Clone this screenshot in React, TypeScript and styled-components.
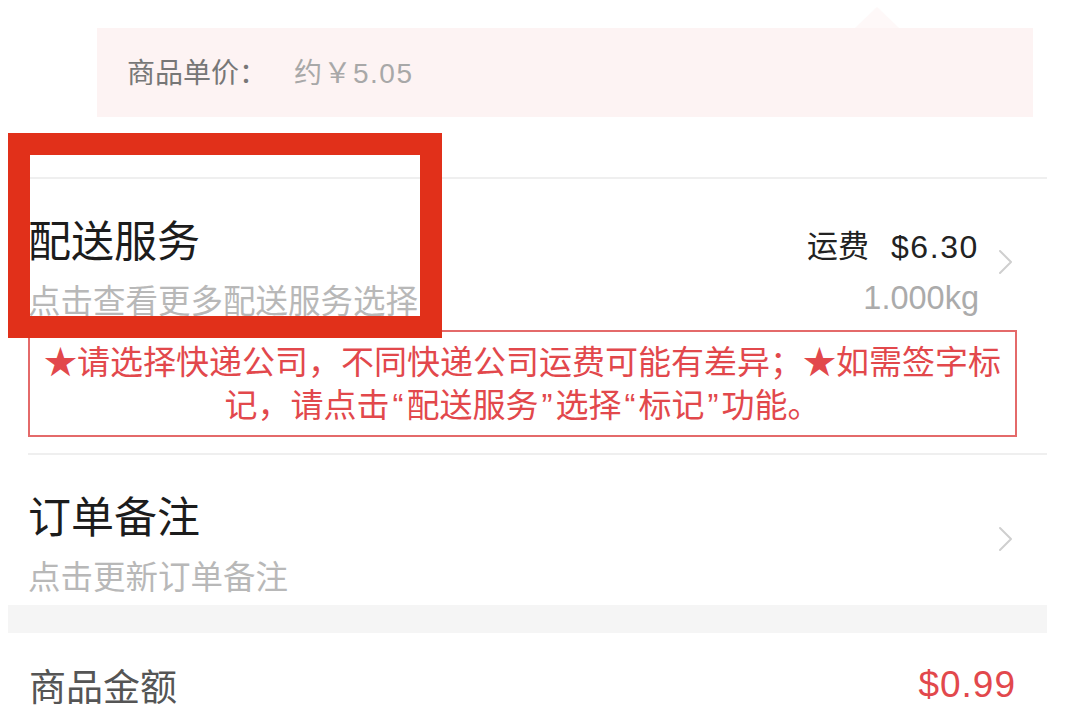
import React from "react";
import styled, { createGlobalStyle } from "styled-components";

const GlobalStyle = createGlobalStyle`
  html, body {
    margin: 0;
    padding: 0;
    background: #ffffff;
  }
  body {
    font-family: "Liberation Sans", "Noto Sans CJK SC", sans-serif;
  }
`;

const Page = styled.div`
  position: relative;
  width: 1080px;
  height: 716px;
  overflow: hidden;
  background: #fff;
`;

const Content = styled.div`
  width: 1039px;
  margin-left: 8px;
  padding-top: 28px;
`;

const PriceBubble = styled.div`
  position: relative;
  margin-left: 89px;
  width: 936px;
  height: 89px;
  box-sizing: border-box;
  padding: 0 0 4px 30px;
  display: flex;
  align-items: center;
  background: #fdf3f3;
  font-size: 28px;

  &::before {
    content: "";
    position: absolute;
    top: -21px;
    left: 758px;
    border-left: 22px solid transparent;
    border-right: 22px solid transparent;
    border-bottom: 21px solid #fef8f8;
  }
`;

const PriceLabel = styled.span`
  color: #777;
`;

const PriceValue = styled.span`
  color: #a8a8a8;
  margin-left: 27px;
  letter-spacing: 1.5px;
`;

const Divider = styled.div<{ $inset: number }>`
  height: 2px;
  background: #efefef;
  margin-left: ${(p) => p.$inset}px;
`;

const Row = styled.div<{ $top: number; $bottom: number }>`
  display: flex;
  align-items: flex-start;
  padding: ${(p) => p.$top}px 34px ${(p) => p.$bottom}px 20px;
`;

const Left = styled.div`
  flex: 1;
  display: flex;
  flex-direction: column;
  gap: 14px;
`;

const Title = styled.div`
  font-size: 43px;
  line-height: 52px;
  color: #1c1c1c;
`;

const Sub = styled.div`
  font-size: 32.5px;
  line-height: 40px;
  color: #b8b8b8;
`;

const Right = styled.div`
  display: flex;
  flex-direction: column;
  align-items: flex-end;
  gap: 11px;
  margin-top: 11px;
`;

const Fee = styled.div`
  font-size: 31px;
  line-height: 40px;
  color: #222;
  display: flex;
  gap: 22px;
`;

const FeeValue = styled.span`
  font-size: 32px;
  letter-spacing: 1.6px;
`;

const Weight = styled.div`
  font-size: 32.5px;
  line-height: 40px;
  color: #ababab;
`;

const ChevronBox = styled.div<{ $top: number; $gap: number }>`
  margin-top: ${(p) => p.$top}px;
  margin-left: ${(p) => p.$gap}px;
  width: 15px;
  height: 26px;
  display: flex;
`;

const Notice = styled.div`
  margin-left: 20px;
  width: 989px;
  box-sizing: border-box;
  border: 2px solid #e46a6a;
  padding: 9px 0 8px;
  text-align: center;
  white-space: nowrap;
  font-size: 33px;
  line-height: 43px;
  color: #e2484c;
`;

const Quote = styled.span`
  padding: 0 3px;
`;

const Spacer = styled.div<{ $h: number }>`
  height: ${(p) => p.$h}px;
`;

const Band = styled.div`
  height: 28px;
  background: #f5f5f5;
`;

const TotalRow = styled.div`
  display: flex;
  justify-content: space-between;
  align-items: center;
  padding: 27px 31px 0 21px;
  height: 50px;
`;

const TotalLabel = styled.div`
  font-size: 37px;
  color: #555;
`;

const TotalValue = styled.div`
  font-size: 37px;
  letter-spacing: 1px;
  color: #e2484c;
`;

const Annotation = styled.div`
  position: absolute;
  left: 8px;
  top: 133px;
  width: 434px;
  height: 205px;
  box-sizing: border-box;
  border: 22px solid #e1301a;
  pointer-events: none;
`;

const Chevron = ({ top, gap }: { top: number; gap: number }) => (
  <ChevronBox $top={top} $gap={gap}>
    <svg width="15" height="26" viewBox="0 0 15 26">
      <polyline
        points="2,2 13,13 2,24"
        fill="none"
        stroke="#cfcfcf"
        strokeWidth="2"
        strokeLinecap="round"
        strokeLinejoin="round"
      />
    </svg>
  </ChevronBox>
);

export default function App() {
  return (
    <Page>
      <GlobalStyle />
      <Content>
        <PriceBubble>
          <PriceLabel>商品单价：</PriceLabel>
          <PriceValue>约￥5.05</PriceValue>
        </PriceBubble>
        <Spacer $h={60} />
        <Divider $inset={22} />
        <Row $top={37} $bottom={8}>
          <Left>
            <Title>配送服务</Title>
            <Sub>点击查看更多配送服务选择</Sub>
          </Left>
          <Right>
            <Fee>
              <span>运费</span>
              <FeeValue>$6.30</FeeValue>
            </Fee>
            <Weight>1.000kg</Weight>
          </Right>
          <Chevron top={33} gap={19} />
        </Row>
        <Notice>
          ★请选择快递公司，不同快递公司运费可能有差异；★如需签字标
          <br />
          记，请点击<Quote>“</Quote>配送服务<Quote>”</Quote>选择
          <Quote>“</Quote>标记<Quote>”</Quote>功能。
        </Notice>
        <Spacer $h={16} />
        <Divider $inset={20} />
        <Row $top={37} $bottom={7}>
          <Left>
            <Title>订单备注</Title>
            <Sub>点击更新订单备注</Sub>
          </Left>
          <Chevron top={34} gap={0} />
        </Row>
        <Band />
        <TotalRow>
          <TotalLabel>商品金额</TotalLabel>
          <TotalValue>$0.99</TotalValue>
        </TotalRow>
      </Content>
      <Annotation />
    </Page>
  );
}
